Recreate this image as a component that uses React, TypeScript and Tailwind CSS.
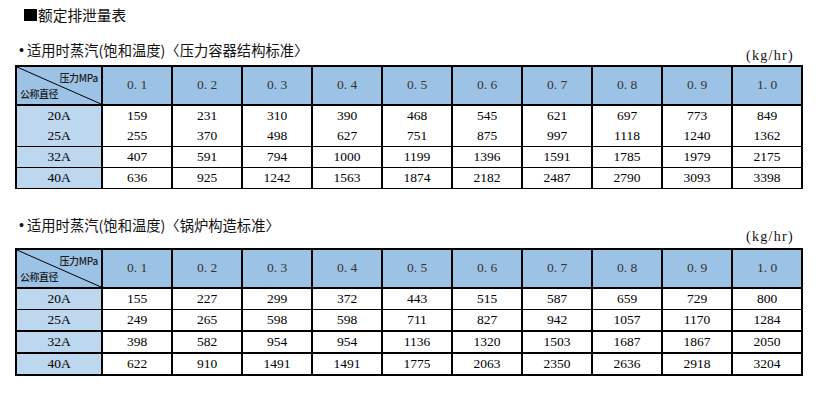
import React from "react";

type Row = [string, number[]];

const heads = ["0. 1", "0. 2", "0. 3", "0. 4", "0. 5", "0. 6", "0. 7", "0. 8", "0. 9", "1. 0"];

const rows1: Row[] = [
  ["20A", [159, 231, 310, 390, 468, 545, 621, 697, 773, 849]],
  ["25A", [255, 370, 498, 627, 751, 875, 997, 1118, 1240, 1362]],
  ["32A", [407, 591, 794, 1000, 1199, 1396, 1591, 1785, 1979, 2175]],
  ["40A", [636, 925, 1242, 1563, 1874, 2182, 2487, 2790, 3093, 3398]],
];

const rows2: Row[] = [
  ["20A", [155, 227, 299, 372, 443, 515, 587, 659, 729, 800]],
  ["25A", [249, 265, 598, 598, 711, 827, 942, 1057, 1170, 1284]],
  ["32A", [398, 582, 954, 954, 1136, 1320, 1503, 1687, 1867, 2050]],
  ["40A", [622, 910, 1491, 1491, 1775, 2063, 2350, 2636, 2918, 3204]],
];

const gapCls = ["mt-[1px]", "mt-[2px]", "mt-[2px]"];

function Table({ rows, tall }: { rows: Row[]; tall: boolean }) {
  const rowH = tall ? "h-[20px]" : "h-[19px]";
  return (
    <div className="bg-black p-[2px] flex flex-col w-fit">
      <div className="grid grid-cols-[84px_repeat(10,68px)] gap-x-[2px] h-[37px]">
        <div className="relative bg-[#9cc3e5] overflow-hidden">
          <svg className="absolute inset-0 w-full h-full" viewBox="0 0 84 37" preserveAspectRatio="none">
            <line x1="0" y1="0" x2="84" y2="37" stroke="#000" strokeWidth="1" />
          </svg>
          <span className="absolute right-[3px] top-[5px] text-[10px] leading-[12px] font-medium font-['Noto_Sans_CJK_SC',sans-serif] text-[#1a1a1a] tracking-[-0.3px]">
            压力MPa
          </span>
          <span className="absolute left-[3px] bottom-[4px] text-[10px] leading-[12px] font-medium font-['Noto_Sans_CJK_SC',sans-serif] text-[#1a1a1a] tracking-[-0.5px]">
            公称直径
          </span>
        </div>
        {heads.map((h) => (
          <div
            key={h}
            className="bg-[#9cc3e5] flex items-center justify-center text-[13.5px] font-['Liberation_Serif',serif] text-[#333]"
          >
            {h}
          </div>
        ))}
      </div>
      {rows.map(([label, vals], i) => (
        <div
          key={label}
          className={`grid grid-cols-[84px_repeat(10,68px)] gap-x-[2px] ${rowH} ${i === 0 ? "mt-[2px]" : gapCls[i - 1]}`}
        >
          <div className="bg-[#bdd7ee] flex items-center justify-center text-[13.5px] font-['Liberation_Serif',serif] text-black">
            {label}
          </div>
          {vals.map((v, j) => (
            <div
              key={j}
              className="bg-white flex items-center justify-center text-[13.5px] font-['Liberation_Serif',serif] text-black"
            >
              {v}
            </div>
          ))}
        </div>
      ))}
    </div>
  );
}

function Subtitle({ text }: { text: string }) {
  return (
    <div className="flex items-center text-[14.3px] leading-[20px] font-['Noto_Sans_CJK_SC',sans-serif] text-[#111]">
      <span className="font-['Liberation_Sans',sans-serif] mr-[3px]">•</span>
      <span>{`适用时蒸汽(饱和温度)〈${text}〉`}</span>
    </div>
  );
}

export default function App() {
  return (
    <div className="w-[819px] h-[402px] bg-white overflow-hidden">
      <div className="pl-[15px] w-[803px]">
        <div className="h-[30px] flex items-center pl-[9px] text-[14.7px] font-['Noto_Sans_CJK_SC',sans-serif] text-[#111]">
          <span className="inline-block w-[13px] h-[12px] bg-black mr-[1px]" />
          <span>额定排泄量表</span>
        </div>
        <div className="h-[35px] flex justify-between items-end">
          <div className="pl-[4px] mb-[5px]">
            <Subtitle text="压力容器结构标准" />
          </div>
          <div className="mr-[9px] mb-[1px] text-[14px] leading-[16px] tracking-[1.3px] font-['Liberation_Serif',serif] text-[#111]">
            (kg/hr)
          </div>
        </div>
        <Table rows={rows1} tall={false} />
        <div className="h-[59px] flex justify-between items-end">
          <div className="pl-[4px] mb-[13px]">
            <Subtitle text="锅炉构造标准" />
          </div>
          <div className="mr-[9px] mb-[3px] text-[14px] leading-[16px] tracking-[1.3px] font-['Liberation_Serif',serif] text-[#111]">
            (kg/hr)
          </div>
        </div>
        <Table rows={rows2} tall={true} />
      </div>
    </div>
  );
}
